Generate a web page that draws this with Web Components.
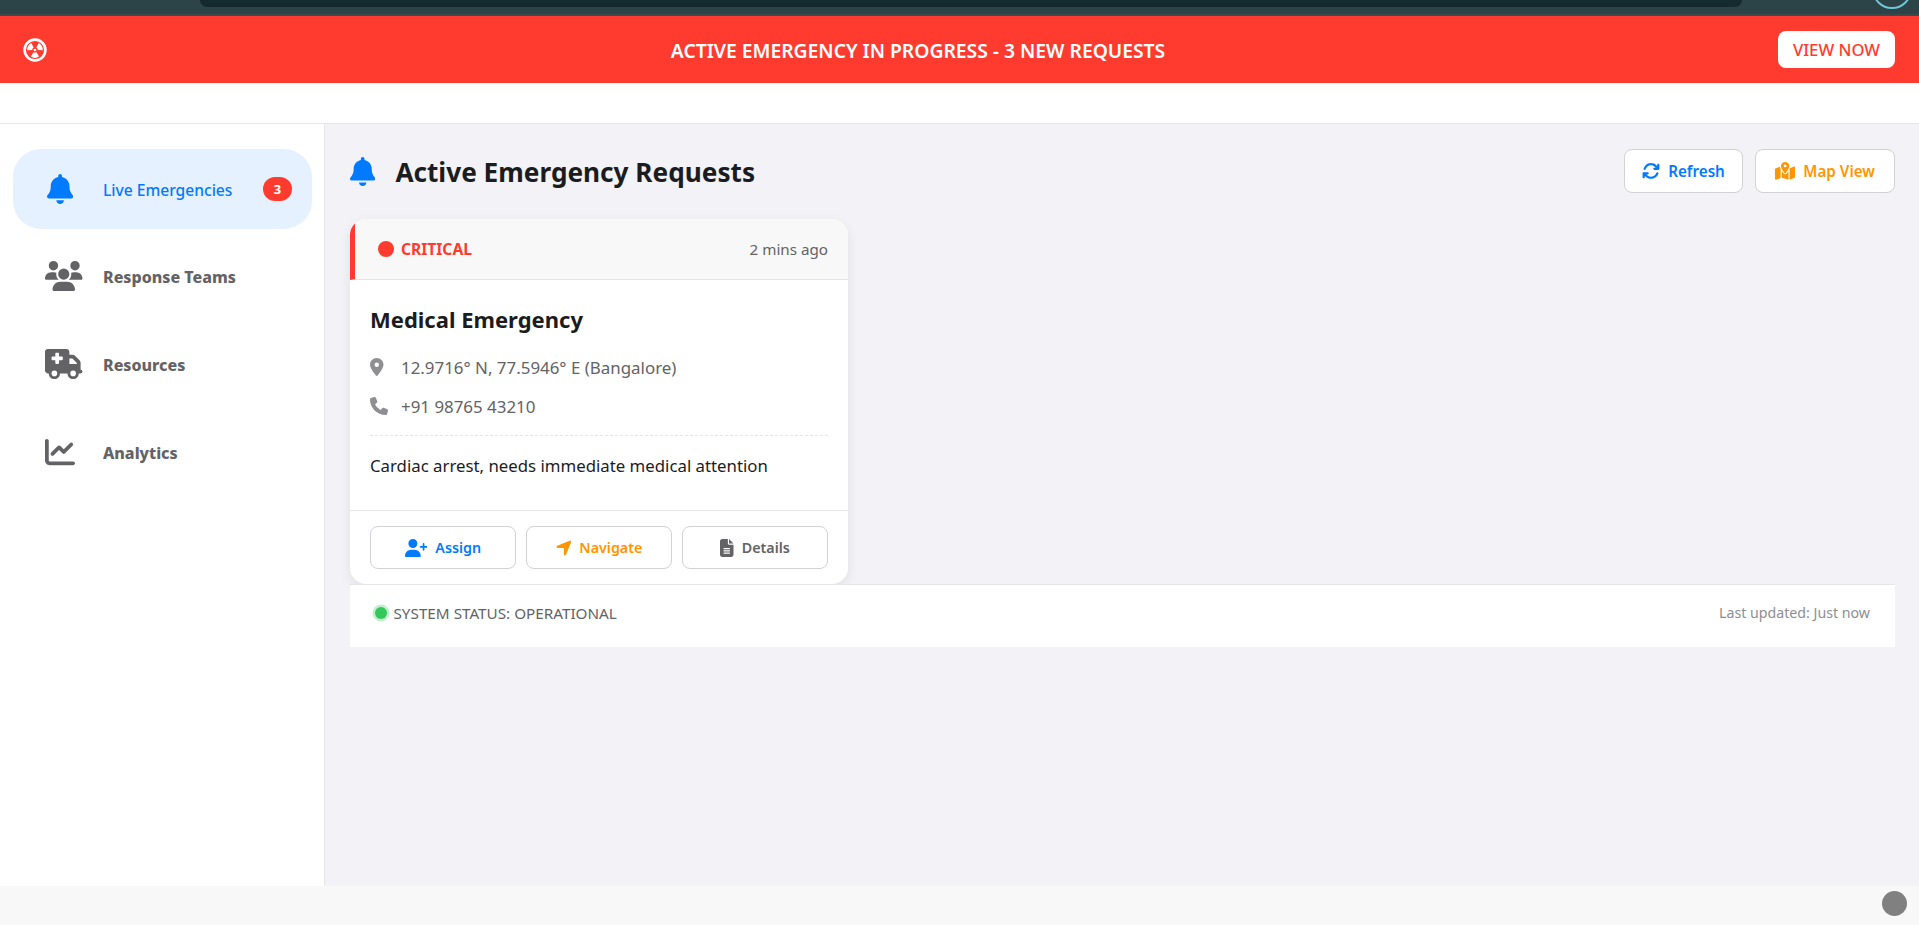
<!DOCTYPE html>
<html lang="en">
<head>
<meta charset="utf-8">
<title>Active Emergency Requests</title>
<style>
  html, body { margin: 0; height: 100%; overflow: hidden; }
  body { font-family: "Noto Sans", "Open Sans", sans-serif; background: #f2f2f7; }
</style>
</head>
<body>
<emergency-app></emergency-app>

<script>
const ICONS = {
  bell: [448, 'M224 0c-17.7 0-32 14.3-32 32V51.2C119 66 64 130.6 64 208v18.8c0 47-17.3 92.4-48.5 127.6l-7.4 8.3c-8.4 9.4-10.4 22.9-5.3 34.4S19.4 416 32 416H416c12.6 0 24-7.4 29.2-18.9s3.1-25-5.3-34.4l-7.4-8.3C401.3 319.2 384 273.9 384 226.8V208c0-77.4-55-142-128-156.8V32c0-17.7-14.3-32-32-32zm45.3 493.3c12-12 18.7-28.3 18.7-45.3H224 160c0 17 6.7 33.3 18.7 45.3s28.3 18.7 45.3 18.7s33.3-6.7 45.3-18.7z'],
  users: [640, 'M144 0a80 80 0 1 1 0 160A80 80 0 1 1 144 0zM512 0a80 80 0 1 1 0 160A80 80 0 1 1 512 0zM0 298.7C0 239.8 47.8 192 106.7 192h42.7c15.9 0 31 3.5 44.6 9.7c-1.3 7.2-1.9 14.7-1.9 22.3c0 38.2 16.8 72.5 43.3 96c-.2 0-.4 0-.7 0H21.3C9.6 320 0 310.4 0 298.7zM405.3 320c-.2 0-.4 0-.7 0c26.6-23.5 43.3-57.8 43.3-96c0-7.6-.7-15-1.9-22.3c13.6-6.3 28.7-9.7 44.6-9.7h42.7C592.2 192 640 239.8 640 298.7c0 11.8-9.6 21.3-21.3 21.3H405.3zM224 224a96 96 0 1 1 192 0 96 96 0 1 1 -192 0zM128 485.3C128 411.7 187.7 352 261.3 352H378.7C452.3 352 512 411.7 512 485.3c0 14.7-11.9 26.7-26.7 26.7H154.7c-14.7 0-26.7-11.9-26.7-26.7z'],
  ambulance: [640, 'M0 48C0 21.5 21.5 0 48 0H368c26.5 0 48 21.5 48 48V96h50.7c17 0 33.3 6.7 45.3 18.7L589.3 192c12 12 18.7 28.3 18.7 45.3V256v32 64c17.7 0 32 14.3 32 32s-14.3 32-32 32H576c0 53-43 96-96 96s-96-43-96-96H256c0 53-43 96-96 96s-96-43-96-96H48c-26.5 0-48-21.5-48-48V48zM416 256H544V237.3L466.7 160H416v96zM160 464a48 48 0 1 0 0-96 48 48 0 1 0 0 96zm368-48a48 48 0 1 0 -96 0 48 48 0 1 0 96 0zM176 80v48l-48 0c-8.8 0-16 7.2-16 16v32c0 8.8 7.2 16 16 16l48 0v48c0 8.8 7.2 16 16 16h32c8.8 0 16-7.2 16-16V192l48 0c8.8 0 16-7.2 16-16V144c0-8.8-7.2-16-16-16l-48 0V80c0-8.8-7.2-16-16-16H192c-8.8 0-16 7.2-16 16z'],
  chart: [512, 'M64 64c0-17.7-14.3-32-32-32S0 46.3 0 64V400c0 44.2 35.8 80 80 80H480c17.7 0 32-14.3 32-32s-14.3-32-32-32H80c-8.8 0-16-7.2-16-16V64zm406.6 86.6c12.5-12.5 12.5-32.8 0-45.3s-32.8-12.5-45.3 0L320 210.7l-57.4-57.4c-12.5-12.5-32.8-12.5-45.3 0l-112 112c-12.5 12.5-12.5 32.8 0 45.3s32.8 12.5 45.3 0L240 221.3l57.4 57.4c12.5 12.5 32.8 12.5 45.3 0l128-128z'],
  pin: [384, 'M215.7 499.2C267 435 384 279.4 384 192C384 86 298 0 192 0S0 86 0 192c0 87.4 117 243 168.3 307.2c12.3 15.3 35.1 15.3 47.4 0zM192 128a64 64 0 1 1 0 128 64 64 0 1 1 0-128z'],
  phone: [512, 'M164.9 24.6c-7.7-18.6-28-28.5-47.4-23.2l-88 24C12.1 30.2 0 46 0 64C0 311.4 200.6 512 448 512c18 0 33.8-12.1 38.6-29.5l24-88c5.3-19.4-4.6-39.7-23.2-47.4l-96-40c-16.3-6.8-35.2-2.1-46.3 11.6L304.7 368C234.3 334.7 177.3 277.7 144 207.3L193.3 167c13.7-11.2 18.4-30 11.6-46.3l-40-96z'],
  userplus: [640, 'M96 128a128 128 0 1 1 256 0A128 128 0 1 1 96 128zM0 482.3C0 383.8 79.8 304 178.3 304h91.4C368.2 304 448 383.8 448 482.3c0 16.4-13.3 29.7-29.7 29.7H29.7C13.3 512 0 498.7 0 482.3zM504 312V248H440c-13.3 0-24-10.7-24-24s10.7-24 24-24h64V136c0-13.3 10.7-24 24-24s24 10.7 24 24v64h64c13.3 0 24 10.7 24 24s-10.7 24-24 24H552v64c0 13.3-10.7 24-24 24s-24-10.7-24-24z'],
  arrow: [448, 'M429.6 92.1c4.9-11.9 2.1-25.6-7-34.7s-22.8-11.9-34.7-7l-352 144c-14.2 5.8-22.2 20.8-19.3 35.8s16.1 25.8 31.4 25.8H224V432c0 15.3 10.8 28.4 25.8 31.4s30-5.1 35.8-19.3l144-352z'],
  file: [384, 'M64 0C28.7 0 0 28.7 0 64V448c0 35.3 28.7 64 64 64H320c35.3 0 64-28.7 64-64V160H256c-17.7 0-32-14.3-32-32V0H64zM256 0V128H384L256 0zM112 256H272c8.8 0 16 7.2 16 16s-7.2 16-16 16H112c-8.8 0-16-7.2-16-16s7.2-16 16-16zm0 64H272c8.8 0 16 7.2 16 16s-7.2 16-16 16H112c-8.8 0-16-7.2-16-16s7.2-16 16-16zm0 64H272c8.8 0 16 7.2 16 16s-7.2 16-16 16H112c-8.8 0-16-7.2-16-16s7.2-16 16-16z'],
  sync: [512, 'M105.1 202.6c7.7-21.8 20.2-42.3 37.8-59.8c62.5-62.5 163.8-62.5 226.3 0L386.3 160H352c-17.7 0-32 14.3-32 32s14.3 32 32 32H463.5c0 0 0 0 0 0h.4c17.7 0 32-14.3 32-32V80c0-17.7-14.3-32-32-32s-32 14.3-32 32v35.2L414.4 97.6c-87.5-87.5-229.3-87.5-316.8 0C73.2 122 55.6 150.7 44.8 181.4c-5.9 16.7 2.9 34.9 19.5 40.8s34.9-2.9 40.8-19.5zM39 289.3c-5 1.5-9.8 4.2-13.7 8.2c-4 4-6.7 8.8-8.1 14c-.3 1.2-.6 2.5-.8 3.8c-.3 1.7-.4 3.4-.4 5.1V432c0 17.7 14.3 32 32 32s32-14.3 32-32V396.9l17.6 17.5 0 0c87.5 87.4 229.3 87.4 316.7 0c24.4-24.4 42.1-53.1 52.9-83.7c5.9-16.7-2.9-34.9-19.5-40.8s-34.9 2.9-40.8 19.5c-7.7 21.8-20.2 42.3-37.8 59.8c-62.5 62.5-163.8 62.5-226.3 0l-.1-.1L125.6 352H160c17.7 0 32-14.3 32-32s-14.3-32-32-32H48.4c-1.6 0-3.2 .1-4.8 .3s-3.1 .5-4.6 1z'],
  map: [576, 'M408 120c0 54.6-73.1 151.9-105.2 192c-7.7 9.6-22 9.6-29.6 0C241.1 271.9 168 174.6 168 120C168 53.7 221.7 0 288 0s120 53.7 120 120zm8 80.4c3.5-6.9 6.7-13.8 9.6-20.6c.5-1.2 1-2.5 1.5-3.7l116-46.4C558.9 123.4 576 135 576 152V422.8c0 9.8-6 18.6-15.1 22.3L416 503V200.4zM137.6 138.3c2.4 14.1 7.2 28.3 12.8 41.5c2.9 6.8 6.1 13.7 9.6 20.6V451.8L32.9 502.7C17.1 509 0 497.4 0 480.4V209.6c0-9.8 6-18.6 15.1-22.3l122.6-49zM327.8 332c13.9-17.4 35.7-45.7 56.2-77V504.3L192 449.4V255c20.5 31.3 42.3 59.6 56.2 77c20.5 25.6 59.1 25.6 79.6 0zM288 152a40 40 0 1 0 0-80 40 40 0 1 0 0 80z']
};

class FaIcon extends HTMLElement {
  constructor() {
    super();
    this.attachShadow({mode: 'open'});
  }

  connectedCallback() {
    const [w, d] = ICONS[this.getAttribute('name')];
    const size = parseFloat(this.getAttribute('size') || 16);
    this.shadowRoot.innerHTML = `
      <style>
        :host { display: inline-flex; flex: none; line-height: 0; }
        svg { fill: currentColor; display: block; }
      </style>
      <svg viewBox="0 0 ${w} 512" width="${size * w / 512}" height="${size}"><path d="${d}"></path></svg>`;
  }
}
customElements.define('fa-icon', FaIcon);

class TopStrip extends HTMLElement {
  constructor() {
    super();
    this.attachShadow({mode: 'open'}).innerHTML = `
      <style>
        :host {
          display: block;
          position: relative;
          height: 14px;
          overflow: hidden;
          background: #2c4347;
          border-bottom: 2px solid #384c4f;
        }
        .pill {
          margin: 0 177px 0 200px;
          height: 7px;
          background: #142a2e;
          border-radius: 0 0 10px 10px;
        }
        .ring {
          position: absolute;
          left: 1872px;
          top: -31px;
          width: 36px;
          height: 36px;
          border: 2px solid #6ec6d8;
          border-radius: 50%;
        }
      </style>
      <div class="pill"></div>
      <div class="ring"></div>`;
  }
}
customElements.define('top-strip', TopStrip);

class AlertBanner extends HTMLElement {
  constructor() {
    super();
    this.attachShadow({mode: 'open'}).innerHTML = `
      <style>
        :host {
          display: flex;
          align-items: center;
          height: 67px;
          padding: 0 24px 0 23px;
          background: #ff3b30;
          color: #fff;
        }
        svg { width: 24px; height: 24px; flex: none; }
        .msg {
          flex: 1;
          text-align: center;
          font-size: 19.3px;
          font-weight: 600;
          padding: 2px 0 0 11px;
        }
        button {
          width: 117px;
          height: 37px;
          padding: 0;
          border: 0;
          border-radius: 8px;
          background: #fff;
          color: #ff3b30;
          font: 500 16.7px "Noto Sans", sans-serif;
        }
      </style>
      <svg viewBox="0 0 24 24" fill="#fff">
        <circle cx="12" cy="12" r="10.4" fill="none" stroke="#fff" stroke-width="2.6"></circle>
        <circle cx="12" cy="12" r="1.3"></circle>
        <path d="M13.48 14.37L16.13 18.61A7.8 7.8 0 0 1 7.87 18.61L10.52 14.37A2.8 2.8 0 0 0 13.48 14.37Z"></path>
        <path transform="rotate(120 12 12)" d="M13.48 14.37L16.13 18.61A7.8 7.8 0 0 1 7.87 18.61L10.52 14.37A2.8 2.8 0 0 0 13.48 14.37Z"></path>
        <path transform="rotate(240 12 12)" d="M13.48 14.37L16.13 18.61A7.8 7.8 0 0 1 7.87 18.61L10.52 14.37A2.8 2.8 0 0 0 13.48 14.37Z"></path>
      </svg>
      <div class="msg">ACTIVE EMERGENCY IN PROGRESS - 3 NEW REQUESTS</div>
      <button>VIEW NOW</button>`;
  }
}
customElements.define('alert-banner', AlertBanner);

class NavItem extends HTMLElement {
  constructor() {
    super();
    this.attachShadow({mode: 'open'});
  }

  connectedCallback() {
    const badge = this.getAttribute('badge');
    this.shadowRoot.innerHTML = `
      <style>
        :host {
          display: flex;
          align-items: center;
          height: 79.6px;
          padding: 0 20px 0 32px;
          border-radius: 28px;
          color: #636366;
          font-size: 16px;
          font-weight: 800;
        }
        :host([active]) {
          background: #e5f1ff;
          color: #007aff;
          font-size: 15.6px;
          font-weight: 500;
        }
        .ic { width: 58px; display: flex; }
        .label { flex: 1; white-space: nowrap; padding-top: 2px; }
        .badge {
          min-width: 29px;
          height: 24px;
          box-sizing: border-box;
          border-radius: 12px;
          background: #ff3b30;
          color: #fff;
          font-size: 13px;
          font-weight: 700;
          line-height: 24px;
          text-align: center;
        }
      </style>
      <span class="ic"><slot name="icon"></slot></span>
      <span class="label"><slot></slot></span>
      ${badge ? `<span class="badge">${badge}</span>` : ''}`;
  }
}
customElements.define('nav-item', NavItem);

class SideNav extends HTMLElement {
  constructor() {
    super();
    this.attachShadow({mode: 'open'}).innerHTML = `
      <style>
        :host {
          display: flex;
          flex-direction: column;
          gap: 8px;
          flex: none;
          width: 299px;
          padding: 25px 12px 0 13px;
          background: #fff;
          border-right: 1px solid #e5e5ea;
        }
      </style>
      <slot></slot>`;
  }
}
customElements.define('side-nav', SideNav);

class ActionButton extends HTMLElement {
  constructor() {
    super();
    this.attachShadow({mode: 'open'}).innerHTML = `
      <style>
        :host {
          display: inline-flex;
          align-items: center;
          justify-content: center;
          gap: 8px;
          box-sizing: border-box;
          height: 43px;
          border: 1px solid #d1d1d6;
          border-radius: 8px;
          background: #fff;
          font-size: 14.3px;
          font-weight: 600;
          white-space: nowrap;
        }
      </style>
      <slot></slot>`;
  }
}
customElements.define('action-button', ActionButton);

class EmergencyCard extends HTMLElement {
  constructor() {
    super();
    this.attachShadow({mode: 'open'}).innerHTML = `
      <style>
        :host {
          display: block;
          width: 498px;
          height: 365px;
          box-sizing: border-box;
          background: #fff;
          border-radius: 16px;
          overflow: hidden;
          box-shadow: 0 4px 12px rgba(0, 0, 0, .08);
          color: #1c1c1e;
        }
        header {
          display: flex;
          align-items: center;
          justify-content: space-between;
          box-sizing: border-box;
          height: 61px;
          padding: 0 20px 0 23px;
          background: #f8f8f8;
          border-left: 5px solid #ff3b30;
          border-bottom: 1px solid #e5e5ea;
        }
        .level {
          display: flex;
          align-items: center;
          gap: 7px;
          color: #ff3b30;
          font-size: 15.6px;
          font-weight: 700;
        }
        .dot { width: 16px; height: 16px; border-radius: 50%; background: #ff3b30; }
        .time { color: #636366; font-size: 15.2px; }
        .body { padding: 0 20px; height: 230px; box-sizing: border-box; }
        h3 { margin: 0; padding-top: 19px; font-size: 22px; line-height: 40px; font-weight: 700; }
        .row {
          display: flex;
          align-items: center;
          height: 20px;
          color: #636366;
          font-size: 16.9px;
          margin-top: 19px;
        }
        .row .ic { width: 31px; display: flex; color: #8e8e93; }
        .row.first { margin-top: 18px; }
        .desc {
          margin-top: 19px;
          border-top: 1px dashed #e5e5ea;
          padding-top: 19px;
          font-size: 16.8px;
          line-height: 21px;
          white-space: nowrap;
        }
        footer {
          display: grid;
          grid-template-columns: repeat(3, 1fr);
          gap: 10px;
          box-sizing: border-box;
          height: 74px;
          padding: 15px 20px 0;
          border-top: 1px solid #e5e5ea;
        }
      </style>
      <header>
        <span class="level"><span class="dot"></span>CRITICAL</span>
        <span class="time">2 mins ago</span>
      </header>
      <div class="body">
        <h3>Medical Emergency</h3>
        <div class="row first"><span class="ic"><fa-icon name="pin" size="18"></fa-icon></span>12.9716° N, 77.5946° E (Bangalore)</div>
        <div class="row"><span class="ic"><fa-icon name="phone" size="18"></fa-icon></span>+91 98765 43210</div>
        <div class="desc">Cardiac arrest, needs immediate medical attention</div>
      </div>
      <footer>
        <action-button style="color:#007aff"><fa-icon name="userplus" size="18"></fa-icon>Assign</action-button>
        <action-button style="color:#ff9500"><fa-icon name="arrow" size="18"></fa-icon>Navigate</action-button>
        <action-button style="color:#636366"><fa-icon name="file" size="18"></fa-icon>Details</action-button>
      </footer>`;
  }
}
customElements.define('emergency-card', EmergencyCard);

class StatusBar extends HTMLElement {
  constructor() {
    super();
    this.attachShadow({mode: 'open'}).innerHTML = `
      <style>
        :host {
          display: flex;
          align-items: center;
          justify-content: space-between;
          box-sizing: border-box;
          height: 63px;
          padding: 0 25px 7px 25px;
          background: #fff;
          border-top: 1px solid #e5e5ea;
          color: #636366;
          font-size: 15.25px;
        }
        .state { display: flex; align-items: center; gap: 6.5px; }
        .dot {
          width: 12px;
          height: 12px;
          border-radius: 50%;
          background: #34c759;
          box-shadow: 0 0 0 2.5px rgba(52, 199, 89, .3);
        }
        .updated { color: #8e8e93; font-size: 14.2px; }
      </style>
      <span class="state"><span class="dot"></span>SYSTEM STATUS: OPERATIONAL</span>
      <span class="updated">Last updated: Just now</span>`;
  }
}
customElements.define('status-bar', StatusBar);

class EmergencyApp extends HTMLElement {
  constructor() {
    super();
    this.attachShadow({mode: 'open'}).innerHTML = `
      <style>
        :host {
          display: flex;
          flex-direction: column;
          height: 925px;
          background: #f2f2f7;
        }
        .spacer { height: 40px; background: #fff; border-bottom: 1px solid #e5e5ea; flex: none; }
        .layout { flex: 1; display: flex; min-height: 0; }
        main { flex: 1; padding: 25px 24px 0 25px; min-width: 0; }
        .head { display: flex; align-items: center; justify-content: space-between; height: 44px; margin-bottom: 26px; }
        h1 {
          display: flex;
          align-items: center;
          gap: 20px;
          margin: 0;
          color: #1c1c1e;
          font-size: 26.2px;
          font-weight: 700;
          white-space: nowrap;
        }
        h1 span { padding-top: 2px; }
        h1 fa-icon { color: #007aff; }
        .tools { display: flex; gap: 12px; }
        .tools action-button { font-size: 15.2px; height: 44px; padding: 0; }
        .bottom {
          position: relative;
          height: 39px;
          flex: none;
          background: #f8f8f8;
        }
        .bottom span {
          position: absolute;
          left: 1882px;
          top: 5px;
          width: 25px;
          height: 25px;
          border-radius: 50%;
          background: #808080;
        }
        .bell { margin-left: 1.5px; }
      </style>
      <top-strip></top-strip>
      <alert-banner></alert-banner>
      <div class="spacer"></div>
      <div class="layout">
        <side-nav>
          <nav-item active badge="3"><fa-icon class="bell" slot="icon" name="bell" size="30"></fa-icon>Live Emergencies</nav-item>
          <nav-item><fa-icon slot="icon" name="users" size="30"></fa-icon>Response Teams</nav-item>
          <nav-item><fa-icon slot="icon" name="ambulance" size="30"></fa-icon>Resources</nav-item>
          <nav-item><fa-icon slot="icon" name="chart" size="30"></fa-icon>Analytics</nav-item>
        </side-nav>
        <main>
          <div class="head">
            <h1><fa-icon name="bell" size="29"></fa-icon><span>Active Emergency Requests</span></h1>
            <div class="tools">
              <action-button style="color:#007aff;width:119px"><fa-icon name="sync" size="18"></fa-icon>Refresh</action-button>
              <action-button style="color:#ff9500;width:140px"><fa-icon name="map" size="18"></fa-icon>Map View</action-button>
            </div>
          </div>
          <emergency-card></emergency-card>
          <status-bar></status-bar>
        </main>
      </div>
      <div class="bottom"><span></span></div>`;
  }
}
customElements.define('emergency-app', EmergencyApp);
</script>
</body>
</html>
